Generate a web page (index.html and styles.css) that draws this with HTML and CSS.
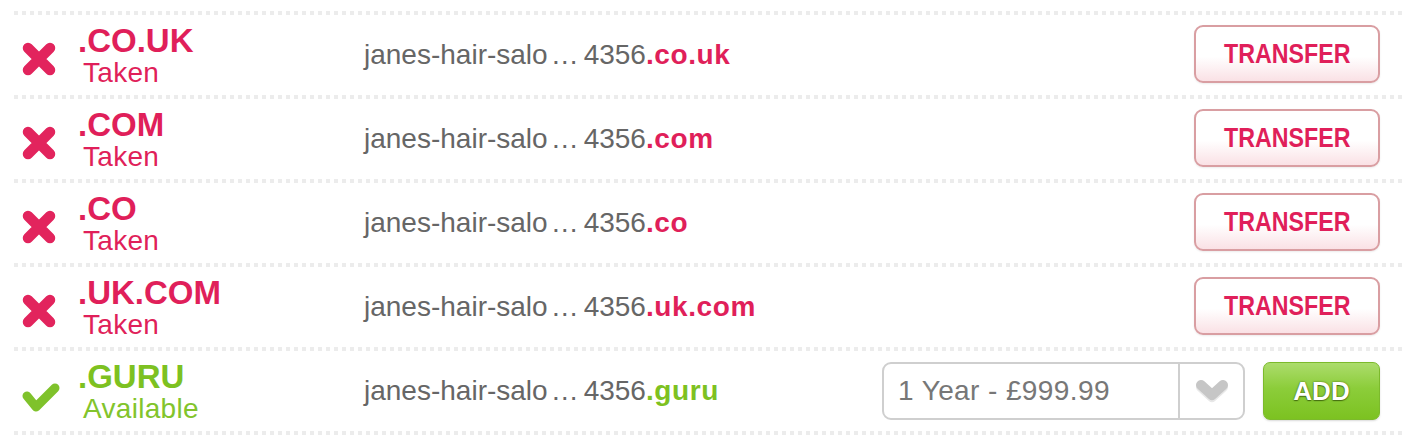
FILE: index.html
```html
<!DOCTYPE html>
<html lang="en">
<head>
  <meta charset="UTF-8">
  <title>Domain search results</title>
  <link rel="stylesheet" href="styles.css">
</head>
<body>
  <ul class="results">
    <li class="result taken">
      <span class="state-icon">
        <svg viewBox="0 0 40 40" width="40" height="40"><path d="M6 9 L28 31 M28 9 L6 31" /></svg>
      </span>
      <div class="tld">
        <div class="tld-name">.CO.UK</div>
        <div class="tld-state">Taken</div>
      </div>
      <div class="domain">janes-hair-salo<span class="cut">…</span>4356<b>.co.uk</b></div>
      <button class="btn-transfer"><span>TRANSFER</span></button>
    </li>
    <li class="result taken">
      <span class="state-icon">
        <svg viewBox="0 0 40 40" width="40" height="40"><path d="M6 9 L28 31 M28 9 L6 31" /></svg>
      </span>
      <div class="tld">
        <div class="tld-name">.COM</div>
        <div class="tld-state">Taken</div>
      </div>
      <div class="domain">janes-hair-salo<span class="cut">…</span>4356<b>.com</b></div>
      <button class="btn-transfer"><span>TRANSFER</span></button>
    </li>
    <li class="result taken">
      <span class="state-icon">
        <svg viewBox="0 0 40 40" width="40" height="40"><path d="M6 9 L28 31 M28 9 L6 31" /></svg>
      </span>
      <div class="tld">
        <div class="tld-name">.CO</div>
        <div class="tld-state">Taken</div>
      </div>
      <div class="domain">janes-hair-salo<span class="cut">…</span>4356<b>.co</b></div>
      <button class="btn-transfer"><span>TRANSFER</span></button>
    </li>
    <li class="result taken">
      <span class="state-icon">
        <svg viewBox="0 0 40 40" width="40" height="40"><path d="M6 9 L28 31 M28 9 L6 31" /></svg>
      </span>
      <div class="tld">
        <div class="tld-name">.UK.COM</div>
        <div class="tld-state">Taken</div>
      </div>
      <div class="domain">janes-hair-salo<span class="cut">…</span>4356<b>.uk.com</b></div>
      <button class="btn-transfer"><span>TRANSFER</span></button>
    </li>
    <li class="result available">
      <span class="state-icon">
        <svg viewBox="0 0 40 40" width="40" height="40"><path d="M5 21 L14 32 L33 13" /></svg>
      </span>
      <div class="tld">
        <div class="tld-name">.GURU</div>
        <div class="tld-state">Available</div>
      </div>
      <div class="domain">janes-hair-salo<span class="cut">…</span>4356<b>.guru</b></div>
      <div class="period-select">
        <span class="period-value">1 Year - £999.99</span>
        <span class="period-arrow">
          <svg viewBox="0 0 36 28" width="36" height="28"><path class="shadow" d="M7 10 L18 20 L29 10" /><path d="M7 8 L18 18 L29 8" /></svg>
        </span>
      </div>
      <button class="btn-add">ADD</button>
    </li>
  </ul>
</body>
</html>
```

FILE: styles.css
```css
body {
  margin: 0;
  background: #fff;
  font-family: 'Liberation Sans', Arial, sans-serif;
}
.results {
  list-style: none;
  margin: 0;
  padding: 11px 0 0 14px;
  width: 1392px;
}
.results::before {
  content: "";
  display: block;
  height: 4px;
  background-image: linear-gradient(to right, #ececec 4px, transparent 4px);
  background-size: 8px 4px;
  background-repeat: repeat-x;
}
.result {
  display: flex;
  align-items: center;
  box-sizing: border-box;
  height: 84px;
  padding: 0 26px 4px 0;
  background-image: linear-gradient(to right, #ececec 4px, transparent 4px);
  background-size: 8px 4px;
  background-repeat: repeat-x;
  background-position: left bottom;
}
.state-icon {
  width: 40px;
  height: 40px;
  margin: 8px 0 0 8px;
}
.state-icon svg {
  display: block;
  fill: none;
  stroke-linecap: round;
  stroke-linejoin: round;
}
.taken .state-icon svg {
  stroke: #e2245d;
  stroke-width: 10.5;
}
.available .state-icon svg {
  stroke: #7fc22b;
  stroke-width: 9;
}
.tld {
  width: 286px;
  margin: 5px 0 0 16px;
}
.tld-name {
  font-size: 33px;
  font-weight: bold;
  line-height: 30px;
}
.tld-state {
  font-size: 28px;
  line-height: 34px;
  padding-left: 5px;
  letter-spacing: 0.3px;
}
.taken .tld { color: #e01f5a; }
.available .tld { color: #7dc121; }
.available .tld-state { color: #82c42c; }

.domain {
  flex: 1;
  font-size: 28px;
  color: #666;
}
.domain .cut {
  margin: 0 5px 0 3px;
}
.domain b {
  font-weight: bold;
  letter-spacing: 0.6px;
}
.taken .domain b { color: #e01f5a; }
.available .domain b { color: #7dc121; }

.btn-transfer {
  width: 186px;
  height: 58px;
  margin-top: -2px;
  padding: 0;
  border: 2px solid #d99ea2;
  border-radius: 9px;
  background: linear-gradient(#fff 55%, #fae1e5);
  box-shadow: 0 1px 2px rgba(0,0,0,0.08);
  color: #e01f5a;
  font-family: inherit;
  font-size: 28px;
  font-weight: bold;
  cursor: pointer;
}
.btn-transfer span {
  display: inline-block;
  transform: scaleX(0.83);
}

.period-select {
  display: flex;
  box-sizing: border-box;
  width: 363px;
  height: 58px;
  border: 2px solid #cfcfcf;
  border-radius: 9px;
  background: #fff;
}
.period-value {
  flex: 1;
  padding-left: 14px;
  font-size: 28px;
  line-height: 54px;
  letter-spacing: 0.4px;
  color: #777;
}
.period-arrow {
  display: flex;
  align-items: center;
  justify-content: center;
  width: 63px;
  border-left: 2px solid #cfcfcf;
}
.period-arrow svg {
  fill: none;
  stroke-linecap: round;
  stroke-linejoin: round;
  stroke-width: 10;
  stroke: #c6c6c6;
}
.period-arrow svg .shadow {
  stroke: #e8e8e8;
}
.btn-add {
  width: 117px;
  height: 58px;
  margin-left: 18px;
  padding: 0;
  border: 1px solid #7cba2c;
  border-radius: 7px;
  background: linear-gradient(#acdc6c, #8ccd3a 45%, #7cc221);
  box-shadow: 0 1px 2px rgba(0,0,0,0.15);
  color: #fff;
  font-family: inherit;
  font-size: 26px;
  font-weight: bold;
  text-shadow: 0 0 2px rgba(40,70,0,0.8), 0 1px 1px rgba(40,70,0,0.6);
  cursor: pointer;
}
```
